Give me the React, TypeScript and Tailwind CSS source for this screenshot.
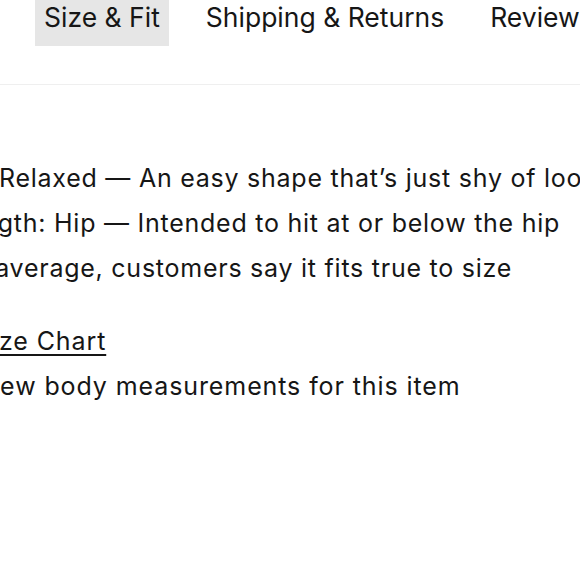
const tabs = ['Size & Fit', 'Shipping & Returns', 'Reviews'];

const fitLines = [
  'Fit: Relaxed — An easy shape that’s just shy of loose',
  'Length: Hip — Intended to hit at or below the hip',
  'On average, customers say it fits true to size',
];

export default function App() {
  return (
    <div
      className="h-[580px] w-[580px] overflow-hidden bg-white text-[#161616]"
      style={{ fontFamily: 'Inter, "Noto Sans", sans-serif' }}
    >
      <div className="-mt-3 flex items-start gap-7 border-b border-[#efefef] pb-[38px] pl-[35px] whitespace-nowrap">
        {tabs.map((tab, i) => (
          <button
            key={tab}
            className={`px-[9px] py-[11px] text-[26.5px] leading-[36px] ${i === 0 ? 'bg-[#e6e6e6]' : ''}`}
          >
            {tab}
          </button>
        ))}
      </div>

      <div className="-ml-[48px] pt-[71px] text-[25px] leading-[45px] tracking-[0.75px] whitespace-nowrap">
        {fitLines.map((line) => (
          <p key={line}>{line}</p>
        ))}
        <div className="mt-[28px] ml-[23px] tracking-[0.9px]">
          <a className="underline underline-offset-[4px]">Size Chart</a>
          <p>View body measurements for this item</p>
        </div>
      </div>
    </div>
  );
}
